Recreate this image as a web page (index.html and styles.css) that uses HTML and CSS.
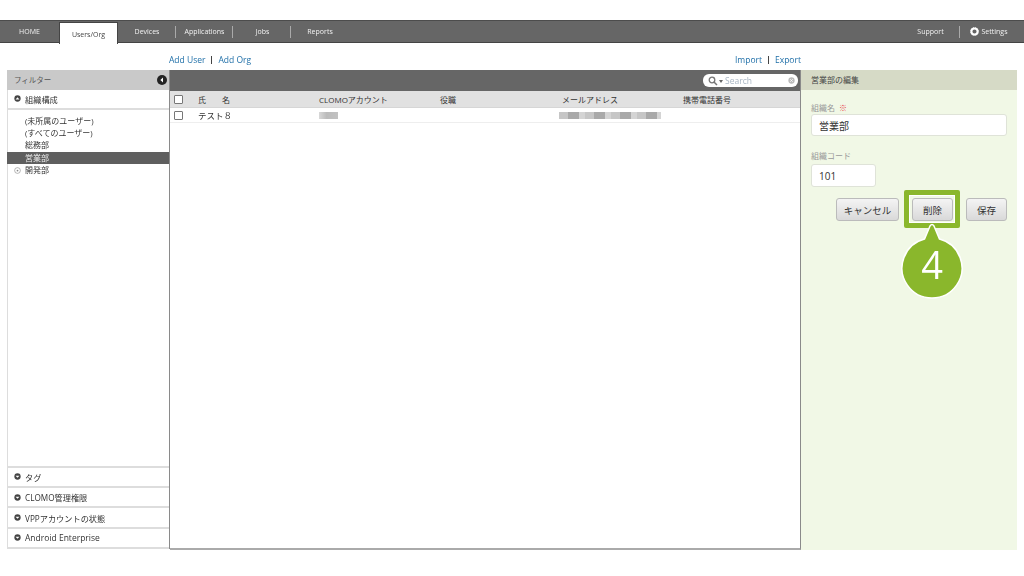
FILE: index.html
```html
<!DOCTYPE html>
<html lang="ja">
<head>
<meta charset="utf-8">
<title>Users/Org</title>
<link rel="stylesheet" href="styles.css">
</head>
<body>
<nav class="nav">
  <div class="tabs">
    <a class="tab t-home">HOME</a>
    <a class="tab t-users active">Users/Org</a>
    <a class="tab t-devices sep">Devices</a>
    <a class="tab t-apps sep">Applications</a>
    <a class="tab t-jobs sep">Jobs</a>
    <a class="tab t-reports">Reports</a>
  </div>
  <div class="nav-right">
    <a class="tab t-support sep">Support</a>
    <a class="tab t-settings">
      <svg class="gear" viewBox="0 0 10 10" width="9" height="9"><circle cx="5" cy="5" r="3.4" fill="none" stroke="#fff" stroke-width="2.2"/><circle cx="5" cy="5" r="4.4" fill="none" stroke="#fff" stroke-width="1" stroke-dasharray="1.2 1.1"/></svg>
      Settings
    </a>
  </div>
</nav>

<div class="actions">
  <div class="actions-left"><a>Add User</a><i></i><a>Add Org</a></div>
  <div class="actions-right"><a>Import</a><i></i><a>Export</a></div>
</div>

<main class="main">
  <aside class="filter">
    <header class="filter-head">
      <span>フィルター</span>
      <svg viewBox="0 0 10 10" width="10" height="10"><circle cx="5" cy="5" r="5" fill="#222"/><path d="M6 2.4 3.4 5 6 7.6z" fill="#fff"/></svg>
    </header>
    <div class="acc acc-top">
      <svg viewBox="0 0 8 8" width="7" height="7"><circle cx="4" cy="4" r="3.6" fill="#444"/><path d="M1.8 5 4 2.6 6.2 5z" fill="#fff"/></svg>
      組織構成
    </div>
    <ul class="tree">
      <li>(未所属のユーザー)</li>
      <li>(すべてのユーザー)</li>
      <li>総務部</li>
      <li class="selected">営業部</li>
      <li class="has-child"><svg viewBox="0 0 8 8" width="7" height="7"><circle cx="4" cy="4" r="3.3" fill="none" stroke="#888" stroke-width=".7"/><circle cx="4" cy="4" r="1" fill="#888"/></svg>開発部</li>
    </ul>
    <div class="acc-stack">
      <div class="acc"><svg viewBox="0 0 8 8" width="7" height="7"><circle cx="4" cy="4" r="3.6" fill="#444"/><path d="M1.8 3 4 5.4 6.2 3z" fill="#fff"/></svg>タグ</div>
      <div class="acc"><svg viewBox="0 0 8 8" width="7" height="7"><circle cx="4" cy="4" r="3.6" fill="#444"/><path d="M1.8 3 4 5.4 6.2 3z" fill="#fff"/></svg>CLOMO管理権限</div>
      <div class="acc"><svg viewBox="0 0 8 8" width="7" height="7"><circle cx="4" cy="4" r="3.6" fill="#444"/><path d="M1.8 3 4 5.4 6.2 3z" fill="#fff"/></svg>VPPアカウントの状態</div>
      <div class="acc acc-latin"><svg viewBox="0 0 8 8" width="7" height="7"><circle cx="4" cy="4" r="3.6" fill="#444"/><path d="M1.8 3 4 5.4 6.2 3z" fill="#fff"/></svg>Android Enterprise</div>
    </div>
  </aside>

  <section class="list">
    <div class="list-bar">
      <div class="search">
        <svg viewBox="0 0 10 10" width="10" height="10"><circle cx="4" cy="4" r="2.8" fill="none" stroke="#777" stroke-width="1.3"/><path d="M6 6 9 9" stroke="#777" stroke-width="1.5"/></svg>
        <span class="caret"></span>
        <span class="search-text">Search</span>
        <svg class="clear" viewBox="0 0 8 8" width="7" height="7"><circle cx="4" cy="4" r="3.6" fill="#bbb"/><path d="M2.4 2.4 5.6 5.6M5.6 2.4 2.4 5.6" stroke="#fff" stroke-width=".8"/></svg>
      </div>
    </div>
    <div class="row row-head">
      <span class="c-check"><b class="box"></b></span>
      <span class="c-name">氏　名</span>
      <span class="c-acc">CLOMOアカウント</span>
      <span class="c-role">役職</span>
      <span class="c-mail">メールアドレス</span>
      <span class="c-tel">携帯電話番号</span>
    </div>
    <div class="row row-data">
      <span class="c-check"><b class="box"></b></span>
      <span class="c-name">テスト８</span>
      <span class="c-acc"><b class="blur blur-acc"></b></span>
      <span class="c-role"></span>
      <span class="c-mail"><b class="blur blur-mail"></b></span>
      <span class="c-tel"></span>
    </div>
  </section>

  <aside class="edit">
    <header class="edit-head">営業部の編集</header>
    <form class="edit-form">
      <label class="lab">組織名<em>※</em></label>
      <div class="input input-name">営業部</div>
      <label class="lab lab-code">組織コード</label>
      <div class="input input-code">101</div>
      <div class="buttons">
        <button type="button" class="btn btn-cancel">キャンセル</button>
        <button type="button" class="btn btn-del">削除</button>
        <button type="button" class="btn btn-save">保存</button>
      </div>
    </form>
  </aside>
</main>

<div class="callout-frame"></div>
<svg class="callout" viewBox="0 0 64 78" width="64" height="78">
  <path d="M30 4 24.500 17A30 30 0 1 0 39.500 17L34 4Q32 1 30 4Z" fill="#8ab72c" stroke="#fff" stroke-width="1.500"/>
</svg>
<span class="callout-num">4</span>
</body>
</html>
```

FILE: styles.css
```css
* { box-sizing: border-box; }
html, body { margin: 0; padding: 0; }
body {
  width: 1024px;
  height: 576px;
  overflow: hidden;
  background: #fff;
  padding-top: 20px;
  font-family: "Open Sans", "Noto Sans CJK JP", sans-serif;
  font-size: 8.5px;
  color: #333;
  position: relative;
}
svg { display: block; flex: none; }

.nav, .actions, .main { filter: blur(.3px); }

.nav {
  height: 23px;
  background: #666;
  border-top: 1px solid #4c4c4c;
  border-bottom: 1px solid #444;
  display: flex;
  justify-content: space-between;
  color: #f2f2f2;
}
.tabs, .nav-right { display: flex; align-items: stretch; }
.tab {
  position: relative;
  display: flex;
  align-items: center;
  justify-content: center;
  font-size: 7px;
  white-space: nowrap;
}
.t-home { width: 59px; }
.t-users {
  width: 59px;
  height: 22px;
  margin-top: 1px;
  background: #fff;
  color: #444;
  border: 1px solid #444;
  border-bottom: 0;
  padding-top: 1px;
}
.t-devices { width: 58px; }
.t-apps { width: 57px; }
.t-jobs { width: 58px; padding-left: 1px; }
.t-reports { width: 58px; }
.sep::after {
  content: "";
  position: absolute;
  right: 0;
  top: 5px;
  height: 12px;
  width: 1px;
  background: #aaa;
}
.t-support { width: 60px; margin-right: 2px; padding-left: 1px; }
.t-settings { width: 62px; gap: 3px; padding-right: 9px; }

.actions {
  height: 27px;
  margin: 0 223px 0 169px;
  padding-top: 6px;
  display: flex;
  justify-content: space-between;
  align-items: center;
  font-size: 8.5px;
  color: #1f6fa8;
}
.actions-left, .actions-right { display: flex; align-items: center; gap: 6px; }
.actions i { width: 1px; height: 8px; background: #444; }

.main {
  height: 480px;
  margin: 0 7px;
  display: flex;
}
.filter {
  width: 163px;
  height: 479px;
  display: flex;
  flex-direction: column;
  border-right: 1px solid #8a8a8a;
  box-shadow: inset 1px 0 0 #ddd;
}
.filter-head {
  height: 20px;
  background: #c9c9c9;
  display: flex;
  align-items: center;
  justify-content: space-between;
  padding: 0 2px 2px 7px;
  font-size: 7.5px;
  color: #555;
}
.filter-head svg { margin-top: 2px; }
.acc {
  height: 20.3px;
  display: flex;
  align-items: center;
  gap: 4px;
  padding-left: 7px;
  border-bottom: 2px solid #ddd;
  font-size: 8.2px;
}
.acc-latin { font-size: 8.5px; }
.acc-top { height: 20px; padding-bottom: 1px; }
.tree {
  list-style: none;
  margin: 0;
  padding: 4.500px 0 0;
  flex: 1;
}
.tree li {
  height: 12.4px;
  line-height: 12.4px;
  padding-left: 18px;
  font-size: 8px;
  white-space: nowrap;
}
.tree .selected { background: #5f5f5f; color: #eee; }
.tree .has-child { display: flex; align-items: center; gap: 4px; padding-left: 7px; }
.acc-stack { border-top: 2px solid #ddd; }

.list {
  width: 631px;
  display: flex;
  flex-direction: column;
  border-right: 1px solid #8a8a8a;
  border-bottom: 2px solid #aaa;
}
.list-bar {
  height: 21px;
  background: #666;
  display: flex;
  justify-content: flex-end;
  align-items: center;
  padding-right: 2px;
}
.search {
  width: 95px;
  height: 12.5px;
  border-radius: 6px;
  background: #fff;
  display: flex;
  align-items: center;
  padding: 0 3px 0 5px;
  font-size: 8.5px;
  color: #a9b6c4;
}
.caret {
  width: 0;
  height: 0;
  margin: 1px 2px 0 1px;
  border: 2px solid transparent;
  border-top: 3px solid #666;
  border-bottom: 0;
}
.search-text { flex: 1; }
.row {
  display: flex;
  align-items: center;
  font-size: 8px;
  position: relative;
}
.row-head { background: #e1e1e1; border-bottom: 1px solid #d6d6d6; height: 17px; }
.row-data { height: 15px; border-bottom: 1px solid #eee; }
.c-check { width: 28px; padding-left: 4px; }
.box {
  display: block;
  width: 9px;
  height: 9px;
  background: #fff;
  border: 1px solid #777;
  border-radius: 1px;
}
.c-name { width: 121px; }
.row-head .c-name { letter-spacing: 4px; }
.c-acc { width: 121px; }
.c-role { width: 122px; }
.c-mail { width: 121px; }
.c-tel { width: 117px; }
.row-data .c-name { font-size: 8.5px; }
.blur { display: block; height: 7px; filter: blur(.5px); }
.blur-acc { width: 19px; margin-top: 1px; background: linear-gradient(90deg, #d8d8d8, #bbb 40%, #c2c2c2); }
.blur-mail {
  width: 102px;
  margin-top: 1px;
  margin-left: -3px;
  background: repeating-linear-gradient(90deg, #c6c6c6 0 9px, #a9a9a9 9px 20px, #d4d4d4 20px 26px);
}

.edit {
  width: 216px;
  background: #f1f8e6;
}
.edit-head {
  height: 20px;
  background: #d6dac6;
  display: flex;
  align-items: center;
  padding: 0 0 2px 10px;
  font-size: 8px;
  color: #444;
}
.edit-form { padding: 11.5px 10px 0; }
.lab { display: block; height: 12px; font-size: 8px; color: #999; line-height: 12px; }
.lab em { color: #e8404c; font-style: normal; font-weight: 700; margin-left: 4px; }
.lab-code { margin-top: 14px; margin-bottom: 2px; }
.input {
  display: flex;
  align-items: center;
  height: 22.5px;
  background: #fff;
  border: 1px solid #dfe3d8;
  border-radius: 3px;
  padding: 1px 0 0 7px;
  font-size: 10px;
  color: #333;
}
.input-name { width: 196px; }
.input-code { width: 65px; }
.buttons {
  display: flex;
  justify-content: flex-end;
  gap: 13px;
  margin-top: 11.5px;
}
.btn {
  height: 23px;
  padding: 0;
  border: 1px solid #bbb;
  border-radius: 3px;
  background: linear-gradient(#f4f4f4, #d9d9d9);
  font: inherit;
  font-size: 9.5px;
  color: #333;
}
.btn-cancel { width: 63px; }
.btn-del { width: 41px; }
.btn-save { width: 41px; }

.callout-frame {
  position: absolute;
  left: 904px;
  top: 190px;
  width: 56px;
  height: 38px;
  border: 5px solid #8ab72c;
  border-radius: 2px;
  box-shadow: inset 0 0 0 1px #fff;
}
.callout {
  position: absolute;
  left: 900px;
  top: 222px;
}
.callout-num {
  position: absolute;
  left: 904px;
  top: 243px;
  width: 56px;
  text-align: center;
  font-family: "Open Sans", sans-serif;
  font-size: 38px;
  line-height: 42px;
  color: #fff;
}
```
